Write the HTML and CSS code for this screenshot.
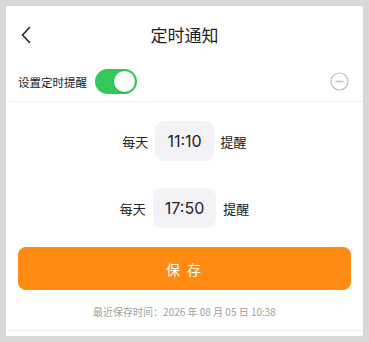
FILE: index.html
```html
<!DOCTYPE html>
<html lang="zh">
<head>
    <meta charset="UTF-8">
    <meta name="viewport" content="width=device-width, initial-scale=1.0">
    <title>定时通知</title>
    <link rel="stylesheet" href="styles.css">
</head>
<body>
    <div class="page">
        <div class="header">
            <span class="back">
                <svg width="12" height="18" viewBox="0 0 12 18"><path d="M9.5 1.5 L2.5 9 L9.5 16.5" fill="none" stroke="#222" stroke-width="1.6" stroke-linecap="round" stroke-linejoin="round"/></svg>
            </span>
            <h2>定时通知</h2>
        </div>
        <div class="setting">
            <span class="label">设置定时提醒</span>
            <span class="toggle"><span class="knob"></span></span>
            <span class="minus">
                <svg width="19" height="19" viewBox="0 0 19 19"><circle cx="9.5" cy="9.5" r="8.5" fill="none" stroke="#bdbdbd" stroke-width="1.2"/><path d="M5.5 9.5 H13.5" stroke="#bdbdbd" stroke-width="1.3"/></svg>
            </span>
        </div>
        <div class="times">
            <div class="time-row">
                <span>每天</span>
                <span class="time">11:10</span>
                <span>提醒</span>
            </div>
            <div class="time-row">
                <span>每天</span>
                <span class="time">17:50</span>
                <span>提醒</span>
            </div>
            <button class="save">保 存</button>
            <p class="last">最近保存时间：2026 年 08 月 05 日 10:38</p>
        </div>
    </div>
</body>
</html>
```

FILE: styles.css
```css
body {
    margin: 0;
    background: #d8d8d8;
    font-family: "Noto Sans CJK SC", "Noto Sans", sans-serif;
    color: #222;
}
.page {
    background: white;
    margin: 6px 6px 6px 6px;
    height: 330px;
    box-sizing: border-box;
}
.header {
    height: 56px;
    display: flex;
    align-items: center;
    justify-content: center;
    position: relative;
}
.header h2 {
    margin: 0;
    font-size: 17px;
    font-weight: 400;
    padding-top: 1px;
}
.back {
    position: absolute;
    left: 14px;
    top: 19px;
}
.setting {
    display: flex;
    align-items: center;
    height: 39px;
    padding: 0 14px 0 12px;
    border-bottom: 1px solid #f0f0f0;
}
.label {
    font-size: 11.5px;
}
.toggle {
    width: 42px;
    height: 25px;
    border-radius: 13px;
    background: #34c759;
    margin-left: 8px;
    position: relative;
}
.knob {
    position: absolute;
    right: 2px;
    top: 2px;
    width: 21px;
    height: 21px;
    border-radius: 50%;
    background: white;
    box-shadow: 0 1px 2px rgba(0, 0, 0, 0.15);
}
.minus {
    margin-left: auto;
    display: flex;
}
.times {
    padding: 19px 12px 0 12px;
    border-bottom: 1px solid #eeeeee;
    height: 229px;
    box-sizing: border-box;
}
.time-row {
    display: flex;
    justify-content: center;
    align-items: center;
    gap: 7px;
    font-size: 13px;
    margin-bottom: 27px;
}
.time-row .time {
    background: #f3f3f7;
    border-radius: 9px;
    font-family: "Inter", sans-serif;
    font-size: 16px;
    padding: 0 12px;
    height: 40px;
    line-height: 40px;
}
.save {
    display: block;
    width: 100%;
    height: 43px;
    border: none;
    border-radius: 8px;
    background: #ff8a14;
    color: white;
    font-family: "Noto Sans CJK SC", sans-serif;
    font-size: 14px;
    letter-spacing: 2px;
    margin-top: -8px;
}
.last {
    margin: 14px 0 0 0;
    text-align: center;
    font-size: 10px;
    color: #a0a0a0;
}
```
